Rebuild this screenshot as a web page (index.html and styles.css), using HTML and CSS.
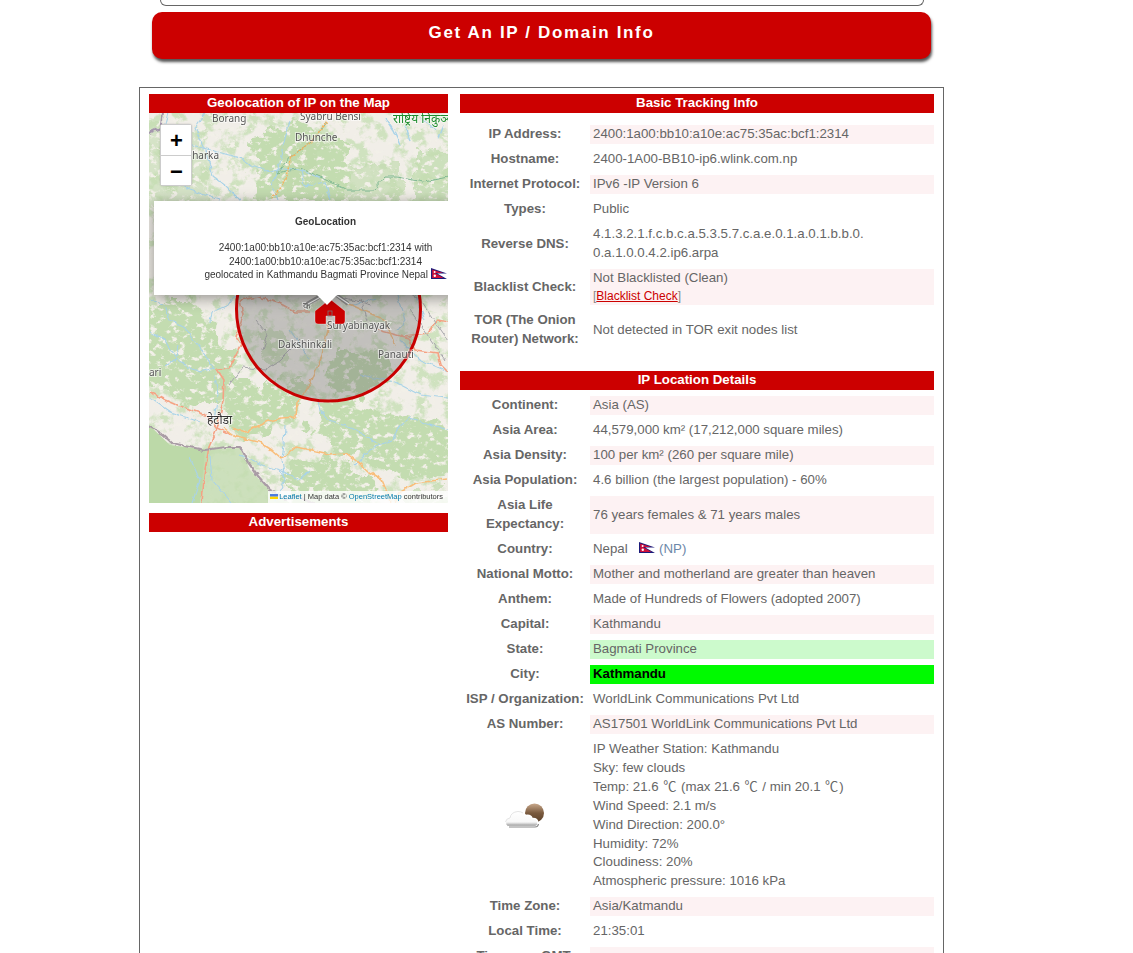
FILE: index.html
```html
<!DOCTYPE html>
<html lang="en">
<head>
<meta charset="utf-8">
<title>IP / Domain Info</title>
<link rel="stylesheet" href="styles.css">
</head>
<body>
<svg class="defs" width="0" height="0" aria-hidden="true">
  <symbol id="np" viewBox="0 0 16 11">
    <path d="M0 0 L16 5.6 H6.2 L16 11 H0 Z" fill="#1b1b7a"/>
    <path d="M1.2 1.6 L12 5 H4 L12.5 10 H1.2 Z" fill="#d0103a"/>
    <circle cx="3.6" cy="4" r="1" fill="#fff"/>
    <circle cx="3.8" cy="7.8" r="1.2" fill="#fff"/>
  </symbol>
</svg>
<div class="page">
  <div class="search-tail"></div>
  <button class="lookup" type="button">Get An IP / Domain Info</button>
  <main class="panel">
    <section class="left">
      <h2 class="bar">Geolocation of IP on the Map</h2>
      <div class="map">
        <svg class="tiles" viewBox="149 113 299 390" width="299" height="390">
          <defs>
            <filter id="organic" x="-5%" y="-5%" width="110%" height="110%" color-interpolation-filters="sRGB">
              <feTurbulence type="fractalNoise" baseFrequency="0.045" numOctaves="5" seed="9" result="n"/>
              <feDisplacementMap in="SourceGraphic" in2="n" scale="34" xChannelSelector="R" yChannelSelector="G"/>
            </filter>
            <filter id="wiggle" x="-5%" y="-5%" width="110%" height="110%">
              <feTurbulence type="fractalNoise" baseFrequency="0.14" numOctaves="2" seed="3" result="n"/>
              <feDisplacementMap in="SourceGraphic" in2="n" scale="5" xChannelSelector="R" yChannelSelector="G"/>
            </filter>
            <filter id="specks" x="0" y="0" width="100%" height="100%" color-interpolation-filters="sRGB">
              <feTurbulence type="fractalNoise" baseFrequency="0.14 0.18" numOctaves="5" seed="21"/>
              <feColorMatrix values="0 0 0 0 .95  0 0 0 0 .94  0 0 0 0 .91  6 0 0 0 -3.3"/>
            </filter>
            <filter id="leafy" x="0" y="0" width="100%" height="100%" color-interpolation-filters="sRGB">
              <feTurbulence type="fractalNoise" baseFrequency="0.07" numOctaves="5" seed="5"/>
              <feColorMatrix values="0 0 0 0 .77  0 0 0 0 .87  0 0 0 0 .7  6 0 0 0 -2.9"/>
            </filter>
          </defs>
          <rect x="149" y="113" width="299" height="390" fill="#f1eee8"/>
          <rect x="149" y="113" width="299" height="390" filter="url(#leafy)" opacity=".75"/>
          <g filter="url(#organic)" fill="#c3dcb0">
            <path d="M130 130 H205 L210 210 H130 Z" opacity=".6"/>
            <path d="M255 135 L300 125 L345 140 L345 200 L250 200 Z"/>
            <path d="M340 165 L400 165 L400 210 H340 Z" opacity=".7"/>
            <path d="M415 150 L455 150 V210 H415 Z" opacity=".8"/>
            <path d="M130 300 H200 L215 345 L235 345 L240 395 L200 405 L130 385 Z"/>
            <path d="M235 380 L300 380 L300 420 L240 440 L225 420 Z"/>
            <path d="M320 395 L395 410 L455 430 V475 L400 480 L340 450 L310 440 Z"/>
            <path d="M290 455 L345 460 L380 490 L370 510 H290 Z"/>
            <path d="M400 490 H455 V510 H400 Z" opacity=".7"/>
          </g>
          <g filter="url(#organic)" fill="#bfd9ab">
            <path d="M342 352 L380 352 L388 375 L362 395 L335 392 L330 368 Z"/>
            <path d="M262 325 L290 340 L285 372 L262 358 Z" opacity=".7"/>
            <path d="M285 140 L325 135 L320 175 L285 190 Z" opacity=".6"/>
          </g>
          <rect x="149" y="113" width="299" height="390" filter="url(#specks)"/>
          <path d="M149 425 L170 445 L209 450 L200 503 H149 Z" fill="#bcd9a8"/>
          <path d="M205 450 L240 448 L250 470 L272 492 L290 503 H200 Z" fill="#c3dcb0" opacity=".8"/>

          <g filter="url(#wiggle)">
            <g fill="none" stroke="#a9d3e8" stroke-width="1.1" stroke-linejoin="round">
              <path d="M168 113 L163 132 L175 140 L192 145 L240 158 L250 165 L270 172 L285 168 L300 170 L320 178"/>
              <path d="M290 120 L282 150 L277 173 L272 185 L278 200"/>
              <path d="M205 113 L195 128 L205 150 L213 176 L225 185 L240 200"/>
              <path d="M302 170 L305 186 L325 182 L330 200"/>
              <path d="M160 170 L190 190 L220 200"/>
              <path d="M150 300 L165 305 L170 320 L185 328 L200 348 L215 370"/>
              <path d="M235 295 L228 305 L212 312 L210 322"/>
              <path d="M150 332 L165 340 L170 350 L180 362 L200 372 L214 368"/>
              <path d="M178 345 L176 358 L165 366"/>
              <path d="M215 376 L218 395 L214 420"/>
              <path d="M282 460 L285 480 L275 500"/>
              <path d="M285 425 L284 445 L282 458"/>
              <path d="M210 455 L212 480 L232 503"/>
              <path d="M190 458 L200 480 L192 503"/>
              <path d="M240 455 L262 465 L280 470 L300 480 L310 470"/>
              <path d="M318 400 L320 412 L330 420 L355 430 L380 445 L392 440 L400 425 L410 418 L448 430"/>
              <path d="M355 465 L370 450 L380 445"/>
              <path d="M150 398 L170 412 L200 422"/>
              <path d="M360 375 L395 382 L420 395 L448 398"/>
              <path d="M400 340 L420 360 L448 372"/>
              <path d="M385 118 L393 130 L400 145 M420 118 L436 130 M405 125 L410 142 M438 140 L444 125" stroke-width="1.4"/>
              <path d="M395 290 L405 320 L398 330 M415 295 L425 320"/>
              <path d="M290 330 L300 345 L310 360 M340 300 L355 305 L375 298"/>
            </g>
            <path d="M277 173 L290 157 L310 143 L327 122" fill="none" stroke="#7fb892" stroke-width="1"/>
            <path d="M277 173 L300 168 L327 180 L347 190 L373 190 L385 177 L397 177 L423 182 L448 177" fill="none" stroke="#7fb892" stroke-width="1"/>
            <path d="M327 122 L310 143 L292 156 L287 177 L280 190 L272 198" fill="none" stroke="#f7b25f" stroke-width="1.5" stroke-dasharray="2 1"/>
            <path d="M149 133 L160 128 L163 113" fill="none" stroke="#a597ad" stroke-width="2"/>

            <g fill="none" stroke="#f5a284" stroke-width="1.6" stroke-linejoin="round">
              <path d="M239 300 L259 297 L279 303 L296 312 L310 312"/>
              <path d="M240 300 L243 315 L236 337 L241 345 L234 358 L229 368 L217 369 L224 380 L223 400 L220 415 L217 428 L209 447 L204 477 L202 503"/>
              <path d="M150 392 L166 400 L182 407 L206 415 L217 428"/>
              <path d="M378 330 L408 338 L415 350 L438 353 L441 365 L448 372"/>
              <path d="M405 336 L428 333 L438 320 L448 322"/>
              <path d="M217 428 L232 435"/>
            </g>
            <g fill="none" stroke="#f9bd7a" stroke-width="1.5" stroke-linejoin="round">
              <path d="M232 428 L246 432 L266 422 L281 418 L296 417 L297 403 L310 385 L322 355 L330 320"/>
              <path d="M224 428 L236 437 L259 442 L272 450 L282 459 L296 447 L312 450 L329 454 L346 453 L359 463 L369 472 L382 480 L389 497 L390 503"/>
              <path d="M394 503 L399 493 L416 483 L448 479"/>
              <path d="M340 300 L385 320 L395 345"/>
            </g>
            <path d="M147 425 L162 434 L172 443 L190 447 L205 450 L225 447 L240 447 L248 462 L258 476 L270 490 L285 499 L300 497 L316 505" fill="none" stroke="#a99ca5" stroke-width="2.2" stroke-linejoin="round"/>
            <g fill="none" stroke="#a8a8ad" stroke-width="1">
              <path d="M300 340 L280 360 L265 370 L243 367 L230 385"/>
              <path d="M375 270 L420 300 L448 340 M410 310 L445 360"/>
              <path d="M256 320 L268 335 L263 350"/>
              <path d="M345 298 L372 305 M360 300 L368 320"/>
            </g>
          </g>

          <circle cx="328.5" cy="309" r="92" fill="#777" fill-opacity=".38" stroke="#c80000" stroke-width="3"/>

          <g class="map-label">
            <text x="212" y="122">Borang</text>
            <text x="300" y="120">Syabru Bensi</text>
            <text x="295" y="141">Dhunche</text>
            <text x="186" y="159">dharka</text>
            <text x="149" y="376">ari</text>
            <text x="278" y="348">Dakshinkali</text>
            <text x="327" y="329">Suryabinayak</text>
            <text x="378" y="358">Panauti</text>
            <text x="207" y="424" class="dark">हेटौडा</text>
            <text x="303" y="309">क</text>
            <text x="393" y="123" class="park">राष्ट्रिय निकुञ्ज</text>
          </g>

          <g>
            <path d="M307 304 L326 293 M348 304 L334 293" stroke="#888" stroke-width="4" fill="none"/>
            <path d="M308 304 L326 294 M349 304 L334 294" stroke="#eee" stroke-width="1.2" fill="none"/>
            <path d="M330 299 L345 311 V321 Q345 324 342 324 H335 V316 H326 V324 H318 Q315 324 315 321 V311 Z" fill="#cc0000" stroke="#fff" stroke-opacity=".5" stroke-width=".6"/>
            <rect x="328" y="311" width="4" height="5" fill="none" stroke="#777" stroke-width=".8"/>
          </g>
        </svg>

        <div class="zoom">
          <button class="zoom-btn" type="button">+</button>
          <button class="zoom-btn" type="button">−</button>
        </div>

        <div class="popup">
          <div class="popup-title">GeoLocation</div>
          <p class="popup-text">2400:1a00:bb10:a10e:ac75:35ac:bcf1:2314 with<br>2400:1a00:bb10:a10e:ac75:35ac:bcf1:2314<br>geolocated in Kathmandu Bagmati Province Nepal <svg class="flag" width="16" height="11"><use href="#np"/></svg></p>
        </div>
        <div class="popup-tip"></div>

        <div class="attribution">
          <svg class="ua" width="8" height="5.4" viewBox="0 0 12 8"><rect width="12" height="4" fill="#4C7BE1"/><rect y="4" width="12" height="4" fill="#FFD500"/></svg>
          <a>Leaflet</a> | Map data © <a>OpenStreetMap</a> contributors
        </div>
      </div>
      <h2 class="bar ads">Advertisements</h2>
    </section>

    <section class="right">
      <h2 class="bar">Basic Tracking Info</h2>
      <table class="info first">
        <tr class="alt"><th>IP Address:</th><td>2400:1a00:bb10:a10e:ac75:35ac:bcf1:2314</td></tr>
        <tr><th>Hostname:</th><td>2400-1A00-BB10-ip6.wlink.com.np</td></tr>
        <tr class="alt"><th>Internet Protocol:</th><td>IPv6 -IP Version 6</td></tr>
        <tr><th>Types:</th><td>Public</td></tr>
        <tr class="tall"><th>Reverse DNS:</th><td>4.1.3.2.1.f.c.b.c.a.5.3.5.7.c.a.e.0.1.a.0.1.b.b.0.<br>0.a.1.0.0.4.2.ip6.arpa</td></tr>
        <tr class="alt mid"><th>Blacklist Check:</th><td>Not Blacklisted (Clean)<br><span class="small">[<a class="red">Blacklist Check</a>]</span></td></tr>
        <tr class="tall"><th>TOR (The Onion Router) Network:</th><td>Not detected in TOR exit nodes list</td></tr>
      </table>
      <h2 class="bar second">IP Location Details</h2>
      <table class="info">
        <tr class="alt"><th>Continent:</th><td>Asia (AS)</td></tr>
        <tr><th>Asia Area:</th><td>44,579,000 km² (17,212,000 square miles)</td></tr>
        <tr class="alt"><th>Asia Density:</th><td>100 per km² (260 per square mile)</td></tr>
        <tr><th>Asia Population:</th><td>4.6 billion (the largest population) - 60%</td></tr>
        <tr class="alt tall"><th>Asia Life Expectancy:</th><td>76 years females &amp; 71 years males</td></tr>
        <tr><th>Country:</th><td>Nepal <svg class="flag np-row" width="16" height="11"><use href="#np"/></svg> <span class="np-code">(NP)</span></td></tr>
        <tr class="alt"><th>National Motto:</th><td>Mother and motherland are greater than heaven</td></tr>
        <tr><th>Anthem:</th><td>Made of Hundreds of Flowers (adopted 2007)</td></tr>
        <tr class="alt"><th>Capital:</th><td>Kathmandu</td></tr>
        <tr class="state"><th>State:</th><td>Bagmati Province</td></tr>
        <tr class="city"><th>City:</th><td>Kathmandu</td></tr>
        <tr><th>ISP / Organization:</th><td>WorldLink Communications Pvt Ltd</td></tr>
        <tr class="alt"><th>AS Number:</th><td>AS17501 WorldLink Communications Pvt Ltd</td></tr>
        <tr class="weather">
          <th>
            <svg class="cloud" width="40" height="26" viewBox="0 0 40 26">
              <defs>
                <linearGradient id="sun" x1="0" y1="0" x2="0" y2="1"><stop offset="0" stop-color="#c9a98c"/><stop offset=".5" stop-color="#7a5a3e"/><stop offset="1" stop-color="#5a4029"/></linearGradient>
                <linearGradient id="cl" x1="0" y1="0" x2="0" y2="1"><stop offset="0" stop-color="#fff"/><stop offset=".7" stop-color="#f8f8f8"/><stop offset=".82" stop-color="#cfcfcf"/><stop offset="1" stop-color="#808080"/></linearGradient>
              </defs>
              <circle cx="29.5" cy="10" r="9.5" fill="url(#sun)"/>
              <path d="M4 23.5 Q0 23.5 0.5 19 Q1 15.5 5 15 Q6 9 13 8.5 Q18 8.5 20.5 12.5 Q26 11.5 27 15.5 Q32.500 15 33 20 Q33 23.500 30 23.500 Z" fill="url(#cl)" stroke="#fff" stroke-width="1.5"/>
              <path d="M0.500 19 Q1 15.500 5 15 Q6 9 13 8.500 Q16 8.500 18 10" fill="none" stroke="#dcdcdc" stroke-width=".8"/>
              <path d="M4 24 H30 Q33 24 33.500 21" fill="none" stroke="#8a8a8a" stroke-width="1.2"/>
            </svg>
          </th>
          <td>IP Weather Station: Kathmandu<br>Sky: few clouds<br>Temp: 21.6 <span class="deg">℃</span> (max 21.6 <span class="deg">℃</span> / min 20.1 <span class="deg">℃</span>)<br>Wind Speed: 2.1 m/s<br>Wind Direction: 200.0°<br>Humidity: 72%<br>Cloudiness: 20%<br>Atmospheric pressure: 1016 kPa</td>
        </tr>
        <tr class="alt"><th>Time Zone:</th><td>Asia/Katmandu</td></tr>
        <tr><th>Local Time:</th><td>21:35:01</td></tr>
        <tr class="alt"><th>Timezone GMT:</th><td>&nbsp;</td></tr>
      </table>
    </section>
  </main>
</div>
</body>
</html>
```
FILE: styles.css
```css
* { box-sizing: border-box; }
html, body {
  margin: 0;
  height: 953px;
  overflow: hidden;
  background: #fff;
}
body {
  font-family: "Liberation Sans", Arial, sans-serif;
  font-size: 13.28px;
  line-height: 18.9px;
  color: #666;
}
.defs { position: absolute; }
.page {
  width: 805px;
  margin-left: 139px;
}
.search-tail {
  height: 6px;
  margin: 0 20px 6px 21px;
  border: 1px solid #666;
  border-top: 0;
  border-radius: 0 0 12px 12px;
}
.lookup {
  display: block;
  width: 779px;
  height: 47px;
  margin: 0 0 28px 13px;
  padding: 0 0 6px;
  border: 0;
  border-radius: 10px;
  background: #cc0000;
  color: #fff;
  font: bold 17px "Liberation Sans", Arial, sans-serif;
  letter-spacing: 1.65px;
  box-shadow: 1px 3px 3px #555;
}
.panel {
  display: flex;
  gap: 12px;
  border: 1px solid #666;
  padding: 6px 9px 0;
  height: 900px;
}
.left { width: 299px; flex: none; }
.right { width: 474px; flex: none; }
.bar {
  margin: 0;
  height: 19px;
  background: #cc0000;
  color: #fff;
  font-size: 13.3px;
  line-height: 18px;
  font-weight: bold;
  text-align: center;
}
.ads { margin-top: 10px; }
.second { margin-top: 16px; }

.map {
  position: relative;
  width: 299px;
  height: 390px;
  overflow: hidden;
}
.tiles { display: block; }
.map-label text {
  font-family: "Noto Sans", "Open Sans", sans-serif;
  font-size: 10px;
  fill: #555;
  stroke: rgba(255,255,255,.55);
  stroke-width: 2px;
  paint-order: stroke;
}
.map-label .dark { fill: #333; font-size: 12px; }
.map-label .park { fill: #1c8c2c; font-size: 12px; }

.zoom {
  position: absolute;
  left: 11px;
  top: 11px;
  width: 32px;
  border: 1px solid rgba(0,0,0,.2);
  border-radius: 3px;
  background: #fff;
  box-shadow: 0 0 2px rgba(0,0,0,.2);
}
.zoom-btn {
  display: block;
  width: 30px;
  height: 30px;
  padding: 1px 0 0 1px;
  border: 0;
  background: #fff;
  color: #000;
  font: bold 22px/29px "Liberation Sans", Arial, sans-serif;
}
.zoom-btn + .zoom-btn { border-top: 1px solid #ccc; }

.popup {
  position: absolute;
  left: 5px;
  top: 88px;
  width: 343px;
  height: 94px;
  background: #fff;
  color: #333;
  font-size: 10px;
  line-height: 13.3px;
  text-align: center;
  box-shadow: 0 3px 14px rgba(0,0,0,.4);
  padding-top: 14px;
}
.popup-title { font-weight: bold; }
.popup-text { margin: 13px 0 0; }
.popup-tip {
  position: absolute;
  left: 168px;
  top: 182px;
  width: 20px;
  height: 10px;
  background: #fff;
  clip-path: polygon(0 0, 100% 0, 50% 100%);
}
.flag { vertical-align: -1px; }

.attribution {
  position: absolute;
  right: 0;
  bottom: 0;
  height: 12px;
  padding: 0 5px 0 2px;
  background: rgba(255,255,255,.8);
  color: #333;
  font-size: 7.5px;
  line-height: 12px;
  white-space: nowrap;
}
.attribution a { color: #0078A8; }
.ua { margin-right: -1px; }

.info {
  width: 474px;
  border-collapse: separate;
  border-spacing: 0 6px;
  table-layout: fixed;
}
.info.first { margin-top: 6px; }
.info th, .info td { height: 19px; }
.info .tall th, .info .tall td { height: 38px; }
.info .mid th, .info .mid td { height: 36px; }
.info th {
  width: 130px;
  padding: 0 5px;
  text-align: center;
  font-weight: bold;
}
.info td { padding: 0 3px; }
.alt td { background: #fdf2f3; }
.state td { background: #ccfacc; }
.city td { background: #00fa00; color: #000; font-weight: bold; }
.small { font-size: 12px; line-height: 17px; display: block; color: #888; }
.red { color: #cc0000; text-decoration: underline; }
.deg { font-family: "Noto Sans CJK SC", "Liberation Sans", sans-serif; line-height: 0; margin: 0 .85px; }
.np-row { margin-left: 8px; vertical-align: 0; }
.np-code { color: #6c87a8; }
.cloud { display: block; margin: 0 auto; }
```
